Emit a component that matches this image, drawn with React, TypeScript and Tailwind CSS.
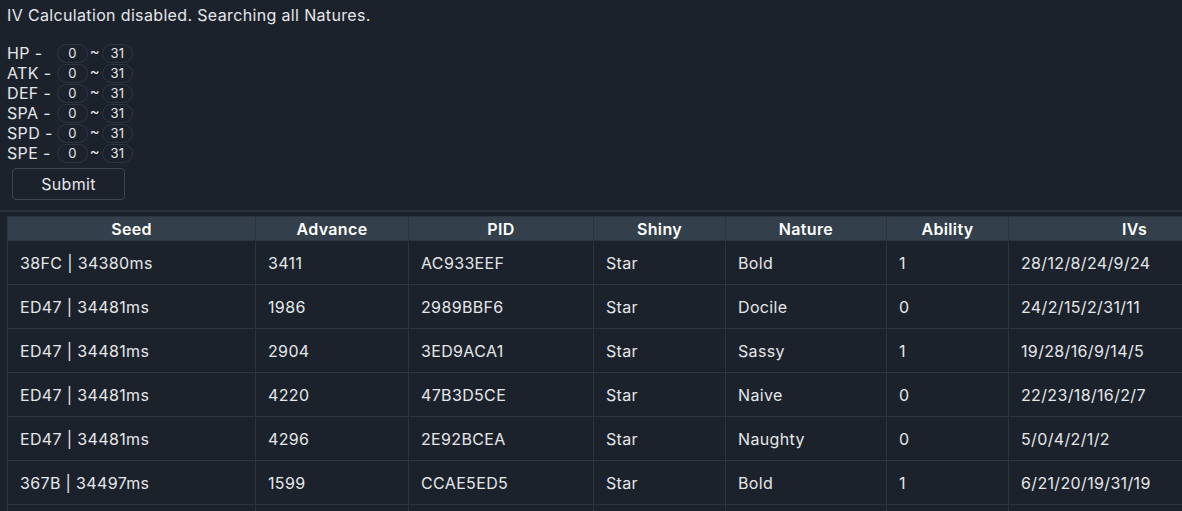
const stats = ['HP', 'ATK', 'DEF', 'SPA', 'SPD', 'SPE'];

const columns = [
  { label: 'Seed', width: 'w-[248px]' },
  { label: 'Advance', width: 'w-[153px]' },
  { label: 'PID', width: 'w-[185px]' },
  { label: 'Shiny', width: 'w-[132px]' },
  { label: 'Nature', width: 'w-[161px]' },
  { label: 'Ability', width: 'w-[122px]' },
  { label: 'IVs', width: 'w-[252px]' },
];

const rows = [
  ['38FC | 34380ms', '3411', 'AC933EEF', 'Star', 'Bold', '1', '28/12/8/24/9/24'],
  ['ED47 | 34481ms', '1986', '2989BBF6', 'Star', 'Docile', '0', '24/2/15/2/31/11'],
  ['ED47 | 34481ms', '2904', '3ED9ACA1', 'Star', 'Sassy', '1', '19/28/16/9/14/5'],
  ['ED47 | 34481ms', '4220', '47B3D5CE', 'Star', 'Naive', '0', '22/23/18/16/2/7'],
  ['ED47 | 34481ms', '4296', '2E92BCEA', 'Star', 'Naughty', '0', '5/0/4/2/1/2'],
  ['367B | 34497ms', '1599', 'CCAE5ED5', 'Star', 'Bold', '1', '6/21/20/19/31/19'],
];

const RangeInput = ({ value }: { value: string }) => (
  <div className="w-[31px] h-[19px] rounded-full border border-[#2c3540] flex items-center justify-center text-[13px] leading-none text-[#e4e6e8]">
    {value}
  </div>
);

export default function App() {
  return (
    <div
      className="h-[511px] bg-[#1b222c] text-[#e6e7e9] overflow-hidden tracking-[0.35px]"
      style={{ fontFamily: 'Inter, "Noto Sans", sans-serif' }}
    >
      <div className="px-[7px]">
        <div className="h-[30px] flex items-center text-[16px]">IV Calculation disabled. Searching all Natures.</div>
        <div className="mt-[13px] flex flex-col">
          {stats.map(s => (
            <div key={s} className="h-[20px] flex items-center text-[16px]">
              <span className="w-[50px] whitespace-nowrap">{s} -</span>
              <RangeInput value="0" />
              <span className="w-[14px] text-center text-[15px] leading-none pb-[4px]">~</span>
              <RangeInput value="31" />
            </div>
          ))}
        </div>
        <button className="mt-[5px] ml-[5px] w-[113px] h-[32px] rounded-[4px] border border-[#3a4450] text-[16px] text-[#e6e7e9]">
          Submit
        </button>
      </div>
      <div className="mt-[10px] h-[2px] bg-[#2b343e]" />
      <div className="mt-[4px] pl-[7px]">
        <table className="table-fixed border-collapse w-[1253px] text-[16px]">
          <colgroup>
            {columns.map(c => (
              <col key={c.label} className={c.width} />
            ))}
          </colgroup>
          <thead>
            <tr className="bg-[#333f4a] h-[24px]">
              {columns.map(c => (
                <th key={c.label} className="border border-[#2b3540] font-semibold text-center text-white leading-none">
                  {c.label}
                </th>
              ))}
            </tr>
          </thead>
          <tbody>
            {rows.map((r, i) => (
              <tr key={i} className="h-[44px]">
                {r.map((cell, j) => (
                  <td key={j} className="border border-[#2b3540] px-3 text-left whitespace-nowrap">
                    {cell}
                  </td>
                ))}
              </tr>
            ))}
            <tr className="h-[44px]">
              {columns.map(c => (
                <td key={c.label} className="border border-[#2b3540]" />
              ))}
            </tr>
          </tbody>
        </table>
      </div>
    </div>
  );
}
